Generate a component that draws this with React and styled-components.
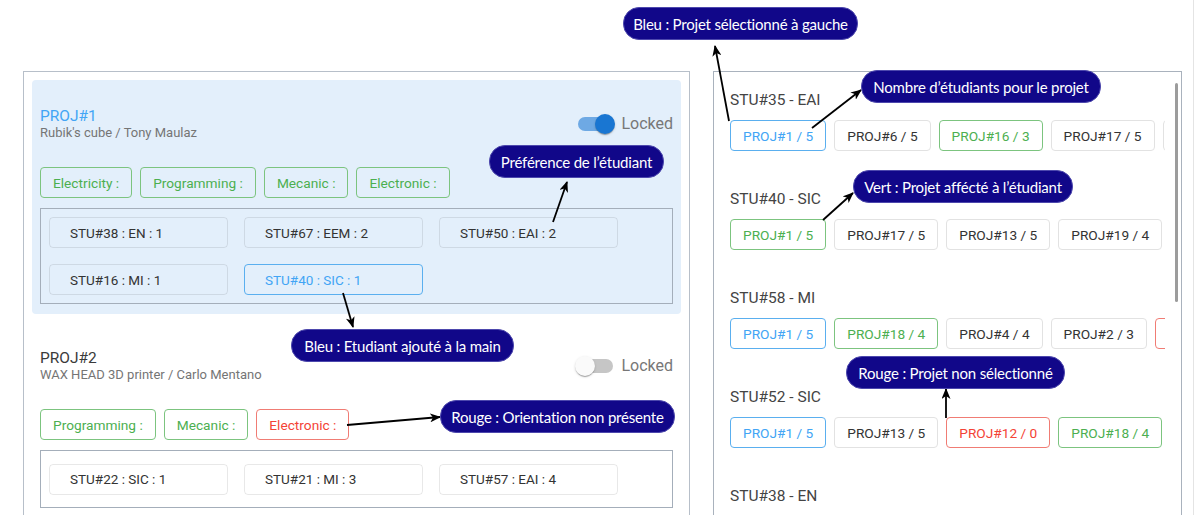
import React from "react";
import styled, { createGlobalStyle } from "styled-components";

const GlobalStyle = createGlobalStyle`
  html, body {
    margin: 0;
    padding: 0;
    background: #fff;
  }
  body {
    font-family: Roboto, "Noto Sans", sans-serif;
    overflow: hidden;
  }
`;

const colors = {
  blue: { text: "#42a5f5", border: "#5aafef" },
  green: { text: "#4caf50", border: "#7cc47f" },
  red: { text: "#f44336", border: "#f07c74" },
  plain: { text: "#333", border: "#e2e2e2" },
};

const Page = styled.div`
  position: relative;
  width: 1199px;
  height: 515px;
  overflow: hidden;
`;

const Board = styled.div`
  display: flex;
  align-items: flex-start;
  padding-left: 23px;
`;

const ProjectPanel = styled.div`
  box-sizing: border-box;
  width: 667px;
  height: 470px;
  margin-top: 71px;
  border: 1px solid #b7bfc9;
  padding: 8px;
  display: flex;
  flex-direction: column;
  gap: 8px;
`;

const Card = styled.div`
  border-radius: 4px;
  padding: 8px 8px 10px;
  background: ${(p) => (p.$selected ? "#e3effb" : "transparent")};
`;

const CardHeader = styled.div`
  display: flex;
  align-items: center;
  justify-content: space-between;
  padding: 19px 0 26px;
`;

const TitleBlock = styled.div`
  display: flex;
  flex-direction: column;
`;

const ProjectTitle = styled.div`
  font-size: 15.5px;
  line-height: 18px;
  color: ${(p) => (p.$selected ? "#42a5f5" : "#3a3a3a")};
`;

const ProjectSub = styled.div`
  font-size: 13px;
  line-height: 16px;
  color: #757575;
`;

const LockToggle = styled.label`
  display: flex;
  align-items: center;
  gap: 6px;
  font-size: 16px;
  line-height: 20px;
  color: #777;
`;

const Switch = styled.span`
  position: relative;
  width: 40px;
  height: 20px;
`;

const Track = styled.span`
  position: absolute;
  left: 3px;
  top: 3px;
  width: 35px;
  height: 14px;
  border-radius: 7px;
  background: ${(p) => (p.$on ? "#6ea9e4" : "#c6c6c6")};
`;

const Thumb = styled.span`
  position: absolute;
  top: 0;
  left: ${(p) => (p.$on ? "20px" : "0")};
  width: 20px;
  height: 20px;
  border-radius: 50%;
  background: ${(p) => (p.$on ? "#1976d2" : "#fafafa")};
  box-shadow: 0 2px 1px -1px rgba(0, 0, 0, 0.2), 0 1px 1px rgba(0, 0, 0, 0.14),
    0 1px 3px rgba(0, 0, 0, 0.12);
`;

const TagRow = styled.div`
  display: flex;
  gap: 8px;
`;

const Tag = styled.div`
  box-sizing: border-box;
  height: 31px;
  padding: 0 12px;
  display: flex;
  align-items: center;
  border-radius: 4px;
  font-size: 13.7px;
  color: ${(p) => colors[p.$tone].text};
  border: 1px solid ${(p) => colors[p.$tone].border};
`;

const StudentBox = styled.div`
  box-sizing: border-box;
  margin-top: 10px;
  min-height: 58px;
  padding: 8px;
  border: 1px solid #a4aeba;
  display: flex;
  flex-wrap: wrap;
  align-content: center;
  gap: 16px;
`;

const StudentChip = styled.div`
  box-sizing: border-box;
  width: 179px;
  height: 31px;
  padding-left: 20px;
  display: flex;
  align-items: center;
  border-radius: 4px;
  font-size: 13.5px;
  color: ${(p) => (p.$added ? "#42a5f5" : "#333")};
  border: 1px solid ${(p) => (p.$added ? "#5aafef" : "rgba(0, 0, 0, 0.09)")};
`;

const StudentPanel = styled.div`
  box-sizing: border-box;
  width: 469px;
  height: 470px;
  margin: 71px 0 0 23px;
  border: 1px solid #a9b2bd;
  display: flex;
`;

const StudentList = styled.div`
  flex: 1;
  min-width: 0;
  overflow: hidden;
  padding: 18px 0 0 16px;
`;

const StudentBlock = styled.div`
  margin-bottom: 38px;
`;

const StudentName = styled.div`
  font-size: 15.5px;
  line-height: 20px;
  color: #444;
  margin-bottom: 10px;
`;

const ProjectRow = styled.div`
  display: flex;
  gap: 8px;
`;

const ProjectChip = styled.div`
  box-sizing: border-box;
  flex-shrink: 0;
  height: 31px;
  padding: 0 12px;
  display: flex;
  align-items: center;
  border-radius: 4px;
  font-size: 13.7px;
  white-space: nowrap;
  color: ${(p) => colors[p.$tone].text};
  border: 1px solid ${(p) => colors[p.$tone].border};
`;

const ScrollTrack = styled.div`
  width: 16px;
  flex-shrink: 0;
  padding-top: 11px;
`;

const ScrollThumb = styled.div`
  margin-left: 10px;
  width: 3px;
  height: 219px;
  border-radius: 2px;
  background: #9c9c9c;
`;

const EdgePanel = styled.div`
  margin-left: 11px;
  flex: 1;
  height: 515px;
  border-left: 1px solid #e4e4e4;
`;

const Note = styled.div`
  position: absolute;
  box-sizing: border-box;
  height: 33px;
  display: flex;
  align-items: center;
  justify-content: center;
  border-radius: 16px;
  background: #110789;
  border: 1px solid #4d48ad;
  color: #fff;
  font-family: Lato, "Open Sans", sans-serif;
  font-size: 15px;
  letter-spacing: -0.2px;
  white-space: nowrap;
`;

const Arrows = styled.svg`
  position: absolute;
  left: 0;
  top: 0;
  pointer-events: none;
`;

const projects = [
  {
    id: "PROJ#1",
    sub: "Rubik's cube / Tony Maulaz",
    selected: true,
    locked: true,
    tags: [
      ["Electricity :", "green"],
      ["Programming :", "green"],
      ["Mecanic :", "green"],
      ["Electronic :", "green"],
    ],
    students: [
      ["STU#38 : EN : 1"],
      ["STU#67 : EEM : 2"],
      ["STU#50 : EAI : 2"],
      ["STU#16 : MI : 1"],
      ["STU#40 : SIC : 1", true],
    ],
  },
  {
    id: "PROJ#2",
    sub: "WAX HEAD 3D printer / Carlo Mentano",
    selected: false,
    locked: false,
    tags: [
      ["Programming :", "green"],
      ["Mecanic :", "green"],
      ["Electronic :", "red"],
    ],
    students: [["STU#22 : SIC : 1"], ["STU#21 : MI : 3"], ["STU#57 : EAI : 4"]],
  },
];

const students = [
  {
    name: "STU#35 - EAI",
    projects: [
      ["PROJ#1 / 5", "blue"],
      ["PROJ#6 / 5", "plain"],
      ["PROJ#16 / 3", "green"],
      ["PROJ#17 / 5", "plain"],
      ["PROJ#2 / 3", "plain"],
    ],
  },
  {
    name: "STU#40 - SIC",
    projects: [
      ["PROJ#1 / 5", "green"],
      ["PROJ#17 / 5", "plain"],
      ["PROJ#13 / 5", "plain"],
      ["PROJ#19 / 4", "plain"],
    ],
  },
  {
    name: "STU#58 - MI",
    projects: [
      ["PROJ#1 / 5", "blue"],
      ["PROJ#18 / 4", "green"],
      ["PROJ#4 / 4", "plain"],
      ["PROJ#2 / 3", "plain"],
      ["PROJ#12 / 0", "red"],
    ],
  },
  {
    name: "STU#52 - SIC",
    projects: [
      ["PROJ#1 / 5", "blue"],
      ["PROJ#13 / 5", "plain"],
      ["PROJ#12 / 0", "red"],
      ["PROJ#18 / 4", "green"],
    ],
  },
  {
    name: "STU#38 - EN",
    projects: [
      ["PROJ#1 / 5", "blue"],
      ["PROJ#6 / 5", "plain"],
      ["PROJ#9 / 4", "plain"],
    ],
  },
];

const notes = [
  { text: "Bleu : Projet sélectionné à gauche", x: 623, y: 7, w: 235 },
  { text: "Nombre d’étudiants pour le projet", x: 861, y: 70, w: 240 },
  { text: "Préférence de l’étudiant", x: 489, y: 145, w: 175 },
  { text: "Vert : Projet affécté à l’étudiant", x: 853, y: 170, w: 220 },
  { text: "Bleu : Etudiant ajouté à la main", x: 291, y: 329, w: 223 },
  { text: "Rouge : Orientation non présente", x: 440, y: 400, w: 235 },
  { text: "Rouge : Projet non sélectionné", x: 846, y: 356, w: 219 },
];

const arrows = [
  [729, 121, 715, 46],
  [812, 128, 861, 90],
  [553, 222, 567, 182],
  [823, 220, 853, 193],
  [343, 293, 353, 327],
  [347, 425, 440, 417],
  [946, 418, 946, 389],
];

function ProjectCard({ project }) {
  return (
    <Card $selected={project.selected}>
      <CardHeader>
        <TitleBlock>
          <ProjectTitle $selected={project.selected}>{project.id}</ProjectTitle>
          <ProjectSub>{project.sub}</ProjectSub>
        </TitleBlock>
        <LockToggle>
          <Switch>
            <Track $on={project.locked} />
            <Thumb $on={project.locked} />
          </Switch>
          Locked
        </LockToggle>
      </CardHeader>
      <TagRow>
        {project.tags.map(([label, tone]) => (
          <Tag key={label} $tone={tone}>
            {label}
          </Tag>
        ))}
      </TagRow>
      <StudentBox>
        {project.students.map(([label, added]) => (
          <StudentChip key={label} $added={added}>
            {label}
          </StudentChip>
        ))}
      </StudentBox>
    </Card>
  );
}

export default function App() {
  return (
    <Page>
      <GlobalStyle />
      <Board>
        <ProjectPanel>
          {projects.map((p) => (
            <ProjectCard key={p.id} project={p} />
          ))}
        </ProjectPanel>
        <StudentPanel>
          <StudentList>
            {students.map((s) => (
              <StudentBlock key={s.name}>
                <StudentName>{s.name}</StudentName>
                <ProjectRow>
                  {s.projects.map(([label, tone], i) => (
                    <ProjectChip key={i} $tone={tone}>
                      {label}
                    </ProjectChip>
                  ))}
                </ProjectRow>
              </StudentBlock>
            ))}
          </StudentList>
          <ScrollTrack>
            <ScrollThumb />
          </ScrollTrack>
        </StudentPanel>
        <EdgePanel />
      </Board>

      <Arrows width="1199" height="515" viewBox="0 0 1199 515">
        <defs>
          <marker
            id="head"
            markerWidth="11"
            markerHeight="9"
            refX="10"
            refY="4.5"
            orient="auto"
            markerUnits="userSpaceOnUse"
          >
            <path d="M0,0 L11,4.5 L0,9 L3,4.5 z" fill="#000" />
          </marker>
        </defs>
        {arrows.map(([x1, y1, x2, y2], i) => (
          <line
            key={i}
            x1={x1}
            y1={y1}
            x2={x2}
            y2={y2}
            stroke="#000"
            strokeWidth="1.8"
            markerEnd="url(#head)"
          />
        ))}
      </Arrows>
      {notes.map((n) => (
        <Note key={n.text} style={{ left: n.x, top: n.y, width: n.w }}>
          {n.text}
        </Note>
      ))}
    </Page>
  );
}
